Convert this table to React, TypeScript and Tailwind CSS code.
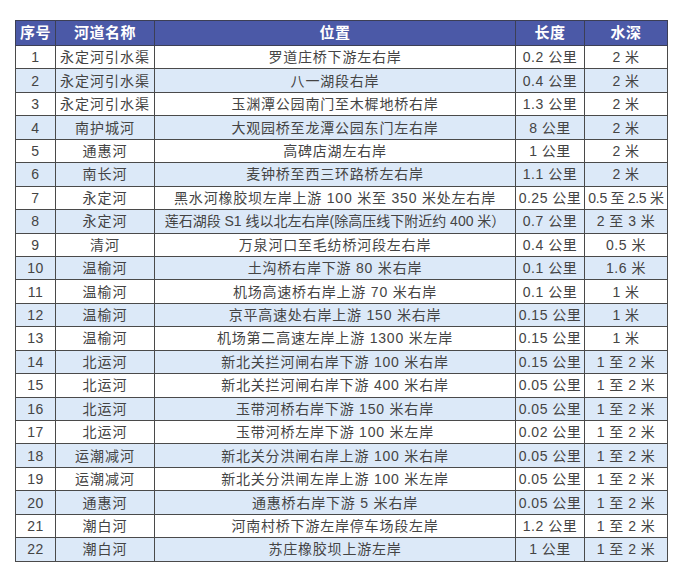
const rows: [string, string, string, string, string][] = [
  ['1', '永定河引水渠', '罗道庄桥下游左右岸', '0.2 公里', '2 米'],
  ['2', '永定河引水渠', '八一湖段右岸', '0.4 公里', '2 米'],
  ['3', '永定河引水渠', '玉渊潭公园南门至木樨地桥右岸', '1.3 公里', '2 米'],
  ['4', '南护城河', '大观园桥至龙潭公园东门左右岸', '8 公里', '2 米'],
  ['5', '通惠河', '高碑店湖左右岸', '1 公里', '2 米'],
  ['6', '南长河', '麦钟桥至西三环路桥左右岸', '1.1 公里', '2 米'],
  ['7', '永定河', '黑水河橡胶坝左岸上游 100 米至 350 米处左右岸', '0.25 公里', '0.5 至 2.5 米'],
  ['8', '永定河', '莲石湖段 S1 线以北左右岸(除高压线下附近约 400 米）', '0.7 公里', '2 至 3 米'],
  ['9', '清河', '万泉河口至毛纺桥河段左右岸', '0.4 公里', '0.5 米'],
  ['10', '温榆河', '土沟桥右岸下游 80 米右岸', '0.1 公里', '1.6 米'],
  ['11', '温榆河', '机场高速桥右岸上游 70 米右岸', '0.1 公里', '1 米'],
  ['12', '温榆河', '京平高速处右岸上游 150 米右岸', '0.15 公里', '1 米'],
  ['13', '温榆河', '机场第二高速左岸上游 1300 米左岸', '0.15 公里', '1 米'],
  ['14', '北运河', '新北关拦河闸右岸下游 100 米右岸', '0.15 公里', '1 至 2 米'],
  ['15', '北运河', '新北关拦河闸右岸下游 400 米右岸', '0.05 公里', '1 至 2 米'],
  ['16', '北运河', '玉带河桥右岸下游 150 米右岸', '0.05 公里', '1 至 2 米'],
  ['17', '北运河', '玉带河桥左岸下游 100 米左岸', '0.02 公里', '1 至 2 米'],
  ['18', '运潮减河', '新北关分洪闸右岸上游 100 米右岸', '0.05 公里', '1 至 2 米'],
  ['19', '运潮减河', '新北关分洪闸左岸上游 100 米左岸', '0.05 公里', '1 至 2 米'],
  ['20', '通惠河', '通惠桥右岸下游 5 米右岸', '0.05 公里', '1 至 2 米'],
  ['21', '潮白河', '河南村桥下游左岸停车场段左岸', '1.2 公里', '1 至 2 米'],
  ['22', '潮白河', '苏庄橡胶坝上游左岸', '1 公里', '1 至 2 米'],
]

const headers = ['序号', '河道名称', '位置', '长度', '水深']

export default function App() {
  return (
    <div
      className="w-[680px] h-[577px] bg-white pt-[20px] pl-[15px]"
      style={{ fontFamily: '"Liberation Sans", "Noto Sans CJK SC", sans-serif' }}
    >
      <table className="border-collapse table-fixed w-[652px] text-[14px] tracking-[0.5px] text-[#444]">
        <colgroup>
          <col className="w-[40px]" />
          <col className="w-[99px]" />
          <col className="w-[361px]" />
          <col className="w-[69px]" />
          <col className="w-[83px]" />
        </colgroup>
        <thead>
          <tr className="h-[25px] bg-[#4b59a7] text-white">
            {headers.map(h => (
              <th key={h} className="border border-[#3c3f55] font-bold text-[15px] text-center p-0">
                {h}
              </th>
            ))}
          </tr>
        </thead>
        <tbody>
          {rows.map((r, i) => (
            <tr key={r[0]} className={`h-[23.45px] ${i % 2 === 1 ? 'bg-[#dce9f8]' : 'bg-white'}`}>
              {r.map((c, j) => (
                <td
                  key={j}
                  className={`border border-[#4a4a4a] text-center p-0 leading-none whitespace-nowrap ${j === 2 ? (c.length > 28 ? 'tracking-[0px]' : 'tracking-[0.8px]') : ''} ${j === 1 ? 'tracking-[1px]' : ''} ${j === 4 && c.length > 8 ? 'tracking-[-0.3px]' : ''}`}
                >
                  {c}
                </td>
              ))}
            </tr>
          ))}
        </tbody>
      </table>
    </div>
  )
}
